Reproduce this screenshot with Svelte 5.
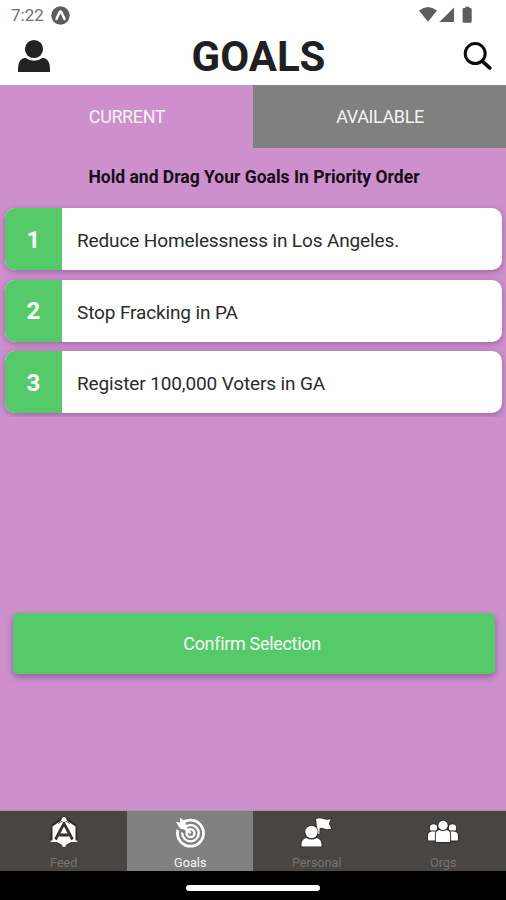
<script lang="ts">
	let tab = $state('CURRENT');
	let page = $state('Goals');

	const tabs = ['CURRENT', 'AVAILABLE'];
	const pages = ['Feed', 'Goals', 'Personal', 'Orgs'];
	const goals = [
		'Reduce Homelessness in Los Angeles.',
		'Stop Fracking in PA',
		'Register 100,000 Voters in GA'
	];
</script>

<div class="screen">
	<div class="status">
		<span class="time">7:22</span>
		<svg width="19" height="19" viewBox="0 0 19 19">
			<circle cx="9.5" cy="9.5" r="9.2" fill="#5b5b5b" />
			<path d="M5.5 13 8.5 6.3q1-1.6 2 0L13.5 13" fill="none" stroke="#fff" stroke-width="2.5" stroke-linecap="round" />
		</svg>
		<svg class="signals" width="56" height="18" viewBox="0 0 56 18" fill="#5d5d5d">
			<path d="M0 4.5Q9-2.5 18 4.5L9 15.8Z" />
			<path d="M35 1.5V16H20.5Z" />
			<path d="M46.3 2V.8h4V2h1.2q1.2 0 1.2 1.2v12.3q0 1.2-1.2 1.2h-6.7q-1.2 0-1.2-1.2V3.2Q43.6 2 44.8 2Z" />
		</svg>
	</div>

	<header>
		<button aria-label="Profile">
			<svg width="34" height="36" viewBox="0 0 34 36" fill="#232325">
				<circle cx="17" cy="10" r="9.1" />
				<path d="M1 33V29.5Q1 20 8.3 18.8Q12 21.7 17 21.7T25.7 18.8Q33 20 33 29.5V33Z" />
			</svg>
		</button>
		<h1>GOALS</h1>
		<button aria-label="Search">
			<svg width="30" height="32" viewBox="0 0 30 32" fill="none" stroke="#0c0c0c">
				<circle cx="13.2" cy="12.6" r="10" stroke-width="3" />
				<path d="M20.5 20.4 27.7 26.9" stroke-width="3.7" stroke-linecap="round" />
			</svg>
		</button>
	</header>

	<div class="tabs">
		{#each tabs as name}
			<button class:active={tab === name} onclick={() => (tab = name)}>{name}</button>
		{/each}
	</div>

	<main>
		<p class="hint">Hold and Drag Your Goals In Priority Order</p>

		<div class="list">
			{#each goals as goal, i}
				<div class="goal">
					<div class="rank">{i + 1}</div>
					<div class="name">{goal}</div>
				</div>
			{/each}
		</div>

		<button class="confirm">Confirm Selection</button>
	</main>

	<nav>
		{#each pages as name}
			<button class:active={page === name} onclick={() => (page = name)}>
				<svg width="34" height="34" viewBox="0 0 34 34">
					{#if name === 'Feed'}
						<path d="M17 0 29 8 31.5 26H24L17 31.5 10 26H2.5L5 8Z" fill="#2f2d2c" />
						<path d="M17 2.5 28.5 10.5V24.5H30.5V26H24L17 30 10 26H3.5V24.5H5.5V10.5Z" fill="#fff" />
						<path d="M8.5 23.5 17 7.5 25.5 23.5M12.5 19H21.5" fill="none" stroke="#353231" stroke-width="2.8" />
						<path d="M11 7.5Q17 3 23 7.5" fill="none" stroke="#454241" />
						<circle cx="17" cy="3.5" r="2.5" fill="#fff" />
						<circle cx="17" cy="29" r="2" fill="#fff" />
					{:else if name === 'Goals'}
						<g fill="none" stroke="#fff">
							<circle cx="17.5" cy="17.2" r="13" stroke-width="2.8" />
							<circle cx="17.5" cy="17.2" r="8.2" stroke-width="2.4" />
							<circle cx="17.5" cy="17.2" r="3.9" stroke-width="2.5" />
						</g>
						<path d="M2 9V4L12 12.5V18L4 13.5Z" fill="#808080" />
						<path d="M3 6 7 6.5V1.8L12 5.5 13.5 11 18.5 16.5 17 18 11 13.5 7 12.5Z" fill="#fff" />
					{:else if name === 'Personal'}
						<g stroke="#292727" stroke-width="1.6" fill="#fff" paint-order="stroke">
							<path d="M16 3Q20 1.5 23.5 3T30.8 3L28.8 7.5 31.3 12.5Q27 14 24 12.5T19.5 12.5V18H17.8Z" />
							<circle cx="11.5" cy="16" r="6.2" />
							<path d="M1.5 30.5V28.5Q1.5 23 6.5 22Q11.5 25 16.5 22Q21.5 23 21.5 28.5V30.5Z" />
						</g>
					{:else}
						<g stroke="#292727" stroke-width="1.8" fill="#fff" paint-order="stroke">
							<circle cx="7.5" cy="12" r="3.7" />
							<circle cx="26.5" cy="12" r="3.7" />
							<path d="M2 24.5V19.5Q2 16 6 15.5H11V24.5ZM32 24.5V19.5Q32 16 28 15.5H23V24.5Z" />
							<circle cx="17" cy="9.5" r="4.7" />
							<path d="M9.8 26V19Q9.8 14.5 13.5 14Q17 16 20.5 14Q24.2 14.5 24.2 19V26Z" />
						</g>
					{/if}
				</svg>
				<span>{name}</span>
			</button>
		{/each}
	</nav>

	<div class="gesture"><div class="pill"></div></div>
</div>

<style>
	:global(body) {
		margin: 0;
	}

	.screen {
		width: 506px;
		height: 900px;
		display: flex;
		flex-direction: column;
		overflow: hidden;
		background: #fff;
		font-family: Roboto, 'Liberation Sans', sans-serif;
	}

	button {
		border: none;
		padding: 0;
		background: none;
		font: inherit;
		cursor: pointer;
	}

	svg {
		display: block;
		flex: none;
	}

	.status {
		height: 30px;
		box-sizing: border-box;
		padding: 0 31px 0 11px;
		display: flex;
		align-items: center;
	}

	.time {
		width: 40px;
		font-size: 17px;
		color: #707070;
	}

	.signals {
		margin-left: auto;
	}

	header {
		height: 54.5px;
		box-sizing: border-box;
		padding: 0 14px 0 17px;
		display: flex;
		align-items: center;
		justify-content: space-between;
	}

	h1 {
		margin: 0 0 0 4px;
		font-size: 42px;
		line-height: 54px;
		font-weight: 700;
		color: #202022;
	}

	.tabs {
		height: 63px;
		display: flex;
		background: #cd90cd;
	}

	.tabs button {
		flex: 1;
		padding: 1px 0 0 1px;
		background: #808080;
		color: #f4f4f4;
		font-size: 18px;
		letter-spacing: -0.4px;
	}

	.tabs button.active {
		background: #cd90cd;
	}

	main {
		flex: 1;
		min-height: 0;
		display: flex;
		flex-direction: column;
		background: #cd90cd;
	}

	.hint {
		margin: 18px 0 0;
		padding-left: 2px;
		line-height: 22px;
		text-align: center;
		font-size: 17.5px;
		font-weight: 700;
		color: #160d18;
	}

	.list {
		margin-top: 15.7px;
		padding: 5px 4px 4px 5px;
		display: flex;
		flex-direction: column;
		gap: 9.5px;
		overflow: hidden;
	}

	.goal {
		height: 62px;
		display: flex;
		background: #fff;
		border-radius: 10px;
		box-shadow: 0 2px 6px rgba(70, 20, 90, 0.36);
	}

	.rank {
		width: 57px;
		padding-top: 1px;
		box-sizing: border-box;
		display: flex;
		align-items: center;
		justify-content: center;
		border-radius: 10px 0 0 10px;
		background: #54cb68;
		color: #fff;
		font-size: 24px;
		font-weight: 700;
	}

	.name {
		padding-left: 15px;
		line-height: 65px;
		font-size: 19px;
		letter-spacing: -0.13px;
		color: #2b2b2b;
	}

	.confirm {
		height: 61px;
		margin: 195.8px 11px 0 13px;
		padding: 1px 4px 0 0;
		border-radius: 5px;
		background: #54cb68;
		color: #f5fff5;
		font-size: 18px;
		letter-spacing: -0.32px;
		box-shadow: 0 3px 6px rgba(60, 20, 70, 0.4);
	}

	nav {
		height: 60px;
		display: flex;
		border-top: 1px solid #a69aa5;
	}

	nav button {
		flex: 1;
		display: flex;
		flex-direction: column;
		align-items: center;
		padding: 5px 0 0 1px;
		background: #484543;
		color: #777472;
		font-size: 12.7px;
	}

	nav button span {
		line-height: 15px;
		margin-top: 5px;
	}

	nav button.active {
		background: #808080;
		color: #f7f7f7;
	}

	.gesture {
		height: 29px;
		display: flex;
		justify-content: center;
		align-items: center;
		background: #000;
	}

	.pill {
		width: 134px;
		height: 6px;
		margin-top: 5px;
		border-radius: 3px;
		background: #fff;
	}
</style>
